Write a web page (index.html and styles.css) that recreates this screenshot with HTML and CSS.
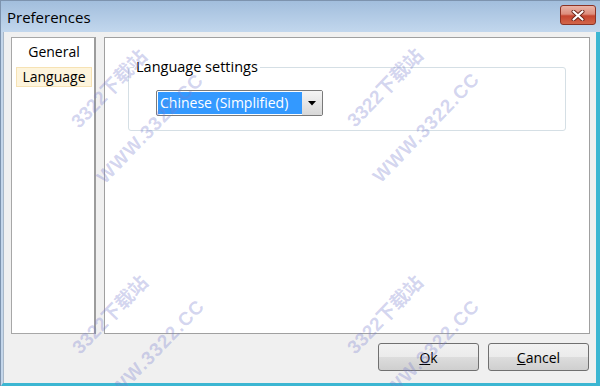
FILE: index.html
```html
<!DOCTYPE html>
<html lang="en">
<head>
  <meta charset="UTF-8">
  <title>Preferences</title>
  <link rel="stylesheet" href="styles.css">
</head>
<body>

  <div class="window">
    <div class="titlebar">
      <span class="title">Preferences</span>
      <button type="button" class="close-btn" aria-label="Close">
        <svg width="14" height="11" viewBox="0 0 14 11">
          <path d="M2.5 1.5 L11.5 9.5 M11.5 1.5 L2.5 9.5" stroke="#6b2418" stroke-width="4" stroke-linecap="round"/>
          <path d="M2.5 1.5 L11.5 9.5 M11.5 1.5 L2.5 9.5" stroke="#ffffff" stroke-width="2.2" stroke-linecap="round"/>
        </svg>
      </button>
    </div>

    <div class="client">
      <div class="main">
        <ul class="nav-list">
          <li>General</li>
          <li class="selected">Language</li>
        </ul>

        <div class="panel">
          <fieldset class="group">
            <legend>Language settings</legend>
            <div class="combo">
              <span class="combo-value">Chinese (Simplified)</span>
              <span class="combo-btn">
                <svg width="8" height="5" viewBox="0 0 8 5"><path d="M0 0 H8 L4 4.5 Z" fill="#000"/></svg>
              </span>
            </div>
          </fieldset>
        </div>
      </div>

      <div class="buttons">
        <button type="button" class="btn"><u>O</u>k</button>
        <button type="button" class="btn"><u>C</u>ancel</button>
      </div>
    </div>

    <!-- watermark overlay -->
    <div class="watermarks">
      <div class="wm wm-a"><div class="wm-text"><span>3322下载站</span><span class="wm-url">WWW.3322.CC</span></div></div>
      <div class="wm wm-b"><div class="wm-text"><span>3322下载站</span><span class="wm-url">WWW.3322.CC</span></div></div>
      <div class="wm wm-c"><div class="wm-text"><span>3322下载站</span><span class="wm-url">WWW.3322.CC</span></div></div>
      <div class="wm wm-d"><div class="wm-text"><span>3322下载站</span><span class="wm-url">WWW.3322.CC</span></div></div>
    </div>
  </div>

</body>
</html>
```

FILE: styles.css
```css
body {
  margin: 0;
  font-family: "Open Sans", "Noto Sans", sans-serif;
  font-size: 14px;
  color: #000;
}
.window {
  position: relative;
  width: 600px;
  height: 386px;
  box-sizing: border-box;
  display: flex;
  flex-direction: column;
  border-top: 1px solid #7d93ae;
  border-left: 1px solid #7d93ae;
  overflow: hidden;
}
.titlebar {
  height: 31px;
  flex: none;
  display: flex;
  justify-content: space-between;
  align-items: flex-start;
  padding: 0 4px 0 6px;
  background: linear-gradient(#a2bedd, #c2d7ed);
}
.title {
  font-size: 15px;
  line-height: 18px;
  margin-top: 7px;
}
.close-btn {
  margin-top: 4px;
  width: 36px;
  height: 20px;
  padding: 0;
  display: flex;
  align-items: center;
  justify-content: center;
  border: 1px solid #8a3326;
  border-radius: 3px;
  background: linear-gradient(#eab4a8 0%, #dd8d7c 45%, #c6452f 55%, #d2664a 100%);
}
.client {
  flex: 1;
  display: flex;
  flex-direction: column;
  min-height: 0;
  background: #f0f0f0;
  border-left: 2px solid #c4d6ea;
  border-right: 4px solid #3cb6d2;
  border-bottom: 3px solid #3cb6d2;
  box-shadow: inset 1px 0 0 #a9b8c8;
  padding: 5px 6px 12px 8px;
}
.main {
  flex: 1;
  display: flex;
  gap: 8px;
  min-height: 0;
  margin-bottom: 9px;
}
.nav-list {
  width: 85px;
  box-sizing: border-box;
  margin: 0;
  padding: 4px 2px 0 4px;
  list-style: none;
  background: #fff;
  border: 1px solid #a7a7a7;
  border-right: 2px solid #9c9c9c;
}
.nav-list li {
  text-align: center;
  line-height: 18px;
  border: 1px solid transparent;
  margin-bottom: 5px;
}
.nav-list li.selected {
  background: #fdf4dc;
  border-color: #f6e2b4;
}
.panel {
  flex: 1;
  background: #fff;
  border: 1px solid #a0a0a0;
  padding: 20px 23px 0 23px;
}
.group {
  margin: 0;
  border: 1px solid #d5dfe5;
  border-radius: 3px;
  padding: 14px 0 14px 0;
}
.group legend {
  margin-left: 5px;
  padding: 0 2px;
  font-size: 14.5px;
  line-height: 18px;
}
.combo {
  display: flex;
  width: 167px;
  height: 26px;
  box-sizing: border-box;
  margin-left: 27px;
  padding: 1px 0 1px 1px;
  border: 1px solid #7a7a7a;
  border-radius: 2px;
  background: #fff;
}
.combo-value {
  flex: 1;
  background: #3399ff;
  color: #fff;
  line-height: 22px;
  padding-left: 2px;
}
.combo-btn {
  width: 20px;
  margin: -1px 0;
  display: flex;
  align-items: center;
  justify-content: center;
  background: linear-gradient(#f4f4f4, #d8d8d8);
}
.buttons {
  display: flex;
  justify-content: flex-end;
  gap: 9px;
  margin-right: 1px;
}
.btn {
  width: 101px;
  height: 28px;
  padding: 0;
  font: inherit;
  color: #000;
  border: 1px solid #707070;
  border-radius: 3px;
  background: linear-gradient(#f2f2f2 0%, #ebebeb 50%, #dddddd 50%, #cfcfcf 100%);
}
.watermarks {
  position: absolute;
  inset: 0;
  pointer-events: none;
}
.wm {
  position: absolute;
  width: 0;
  height: 0;
}
.wm-a { left: 129px; top: 108px; }
.wm-b { left: 405px; top: 107px; }
.wm-c { left: 130px; top: 334px; }
.wm-d { left: 405px; top: 334px; }
.wm-text {
  position: absolute;
  left: 0;
  top: 0;
  transform: translate(-50%, -50%) rotate(-46deg);
  display: flex;
  flex-direction: column;
  align-items: center;
  gap: 37px;
  font-family: "Liberation Sans", "Noto Sans CJK SC", sans-serif;
  font-weight: bold;
  font-size: 19px;
  line-height: 20px;
  white-space: nowrap;
  color: rgba(120, 125, 205, 0.32);
}
.wm-url {
  letter-spacing: 1px;
}
```
